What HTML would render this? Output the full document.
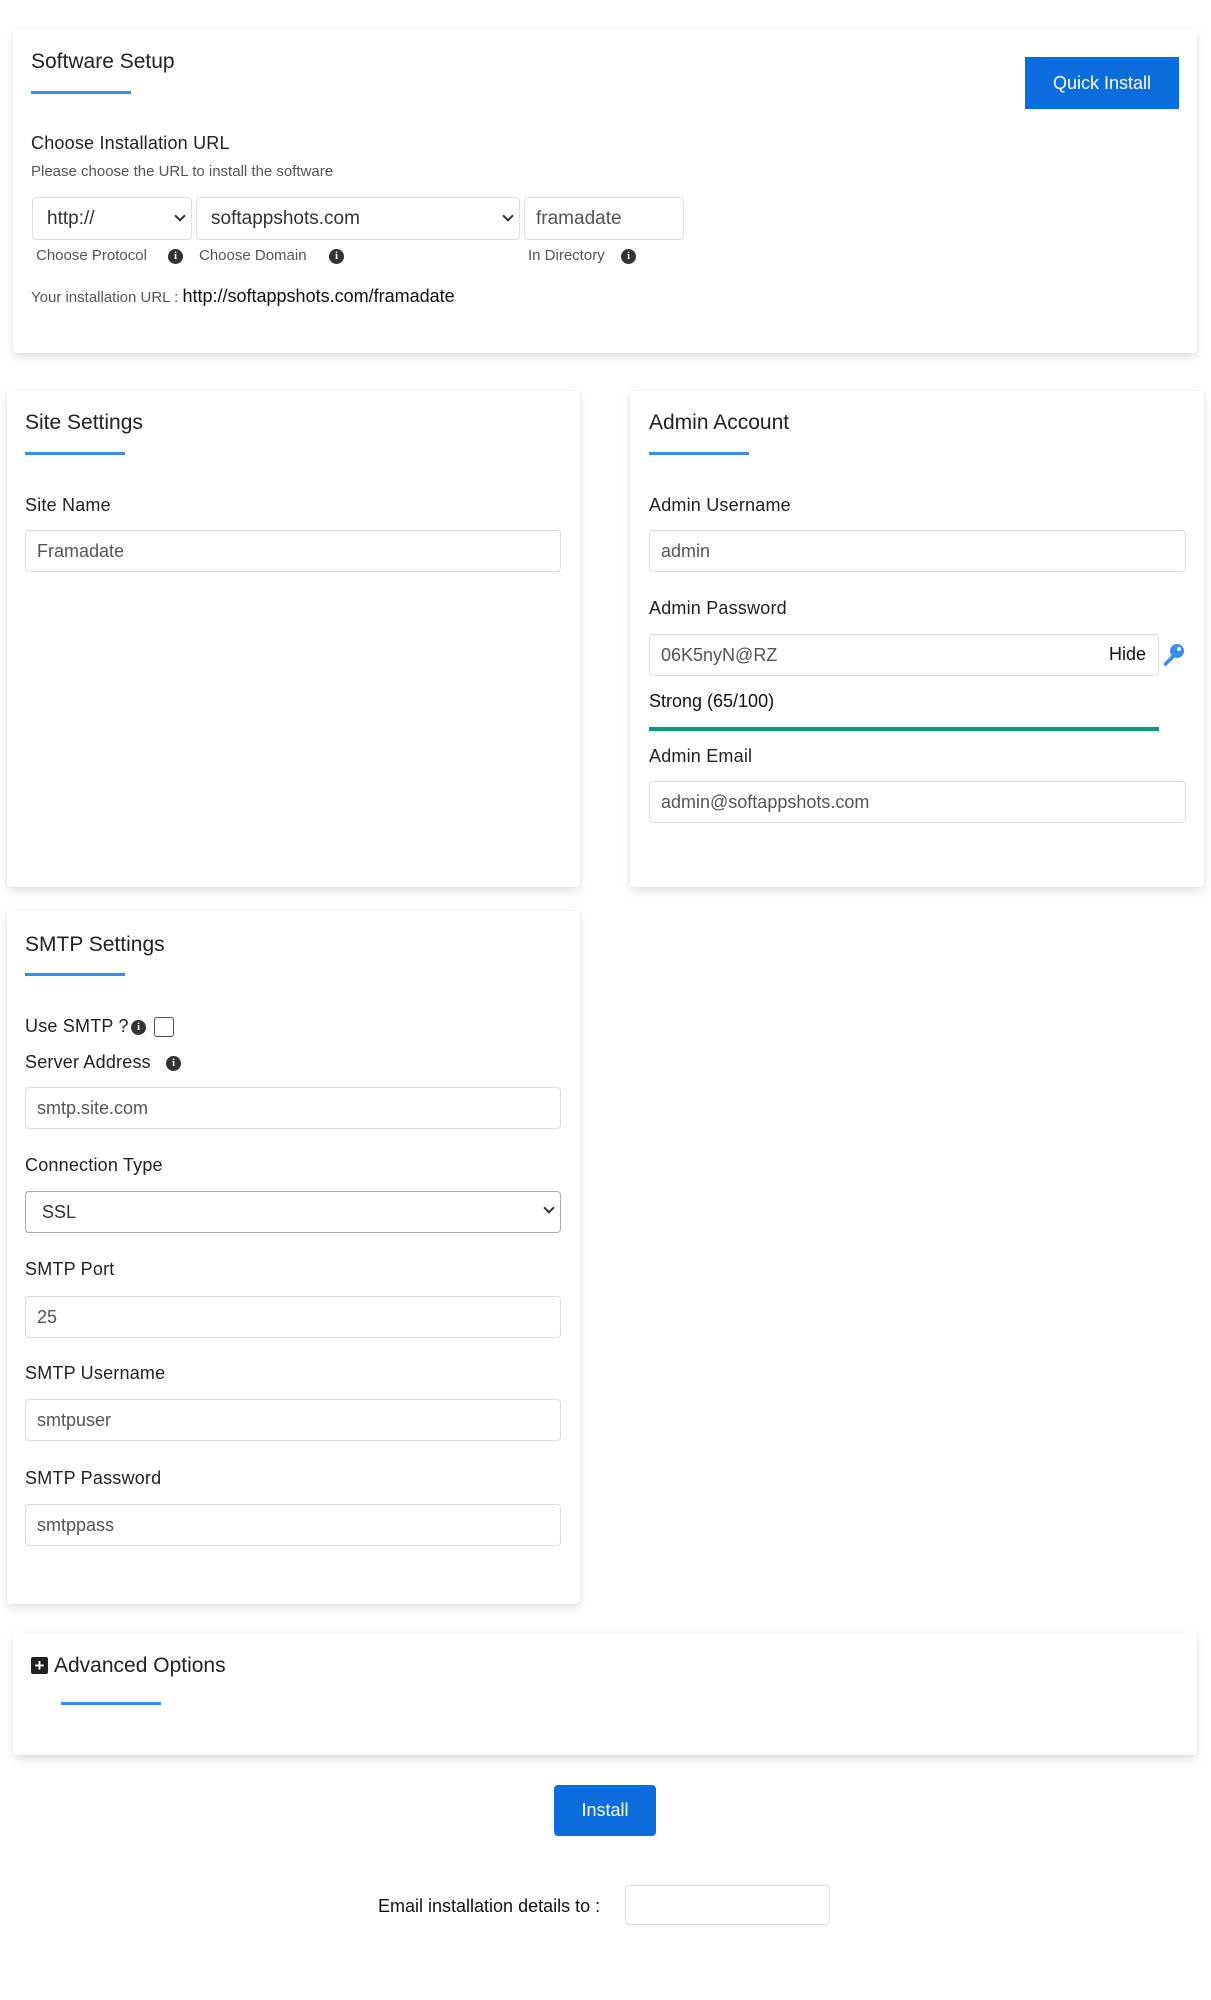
<!DOCTYPE html>
<html><head><meta charset="utf-8"><style>
*{box-sizing:border-box;margin:0;padding:0}
body{width:1211px;height:2000px;background:#fff;font-family:"Liberation Sans",sans-serif;color:#222;position:relative;overflow:hidden}
.card{position:absolute;background:#fff;border-radius:4px;box-shadow:0 4px 10px rgba(0,0,0,0.12),0 0 2px rgba(0,0,0,0.06)}
.a{position:absolute;white-space:nowrap}
.t{font-size:21px;color:#222}
.ul{position:absolute;height:3px;background:#3b8cf0}
.lb{font-size:18px;color:#222;letter-spacing:0.2px}
.in{position:absolute;border:1px solid #ddd;border-radius:4px;background:#fff;font-size:18px;color:#555;padding-left:11px;display:flex;align-items:center}
.info{position:absolute;width:15px;height:15px;border-radius:50%;background:#333;color:#fff;font:bold 11px "Liberation Serif",serif;text-align:center;line-height:15px}
.chev{position:absolute;width:8px;height:8px;border-right:2px solid #333;border-bottom:2px solid #333;transform:rotate(45deg)}
.btn{position:absolute;background:#0a6ddc;color:#fff;font-size:18px;display:flex;align-items:center;justify-content:center}
</style></head><body>

<div class="card" style="left:13px;top:29px;width:1184px;height:324px"></div>
<div class="a t" style="left:31px;top:50px">Software Setup</div>
<div class="ul" style="left:31px;top:91px;width:100px"></div>
<div class="btn" style="left:1025px;top:57px;width:154px;height:52px">Quick Install</div>
<div class="a lb" style="left:31px;top:133px">Choose Installation URL</div>
<div class="a" style="left:31px;top:163px;font-size:15px;color:#555">Please choose the URL to install the software</div>
<div class="in" style="left:32px;top:197px;width:160px;height:43px;color:#333;font-size:19px;padding-left:14px">http://</div>
<div class="chev" style="left:176px;top:212px"></div>
<div class="in" style="left:196px;top:197px;width:324px;height:43px;color:#333;font-size:19px;padding-left:14px">softappshots.com</div>
<div class="chev" style="left:504px;top:212px"></div>
<div class="in" style="left:524px;top:197px;width:160px;height:43px;font-size:19px">framadate</div>
<div class="a" style="left:36px;top:247px;font-size:15px;color:#555">Choose Protocol</div><div class="info" style="left:168px;top:249px">i</div>
<div class="a" style="left:199px;top:247px;font-size:15px;color:#555">Choose Domain</div><div class="info" style="left:329px;top:249px">i</div>
<div class="a" style="left:528px;top:247px;font-size:15px;color:#555">In Directory</div><div class="info" style="left:621px;top:249px">i</div>
<div class="a" style="left:31px;top:286px;font-size:15px;color:#555">Your installation URL : <span style="font-size:18px;color:#111">http://softappshots.com/framadate</span></div>

<div class="card" style="left:7px;top:391px;width:573px;height:496px"></div>
<div class="a t" style="left:25px;top:411px">Site Settings</div>
<div class="ul" style="left:25px;top:452px;width:100px"></div>
<div class="a lb" style="left:25px;top:495px">Site Name</div>
<div class="in" style="left:25px;top:530px;width:536px;height:42px">Framadate</div>

<div class="card" style="left:630px;top:391px;width:574px;height:496px"></div>
<div class="a t" style="left:649px;top:411px">Admin Account</div>
<div class="ul" style="left:649px;top:452px;width:100px"></div>
<div class="a lb" style="left:649px;top:495px">Admin Username</div>
<div class="in" style="left:649px;top:530px;width:537px;height:42px">admin</div>
<div class="a lb" style="left:649px;top:598px">Admin Password</div>
<div class="in" style="left:649px;top:634px;width:510px;height:42px">06K5nyN@RZ</div>
<div class="a" style="left:1109px;top:644px;font-size:18px;color:#111">Hide</div>
<svg class="a" style="left:1161px;top:643px" width="24" height="24" viewBox="0 0 24 24"><circle cx="16" cy="8" r="7" fill="#3b8cf0"/><circle cx="18" cy="6" r="2" fill="#fff"/><path d="M12 11 L3 20 Q2 22 4 23 Q5 23 6 22 L15 13Z" fill="#3b8cf0"/></svg>
<div class="a" style="left:649px;top:691px;font-size:18px;color:#111">Strong (65/100)</div>
<div class="a" style="left:649px;top:727px;width:510px;height:4px;background:#0d9680"></div>
<div class="a lb" style="left:649px;top:746px">Admin Email</div>
<div class="in" style="left:649px;top:781px;width:537px;height:42px">admin@softappshots.com</div>

<div class="card" style="left:7px;top:911px;width:573px;height:693px"></div>
<div class="a t" style="left:25px;top:933px">SMTP Settings</div>
<div class="ul" style="left:25px;top:973px;width:100px"></div>
<div class="a lb" style="left:25px;top:1016px">Use SMTP ?</div>
<div class="info" style="left:131px;top:1020px">i</div>
<div class="a" style="left:154px;top:1017px;width:20px;height:20px;border:1.5px solid #555;border-radius:3px"></div>
<div class="a lb" style="left:25px;top:1052px">Server Address</div>
<div class="info" style="left:166px;top:1056px">i</div>
<div class="in" style="left:25px;top:1087px;width:536px;height:42px">smtp.site.com</div>
<div class="a lb" style="left:25px;top:1155px">Connection Type</div>
<div class="in" style="left:25px;top:1191px;width:536px;height:42px;border-color:#aaa;color:#333;padding-left:16px">SSL</div>
<div class="chev" style="left:545px;top:1204px"></div>
<div class="a lb" style="left:25px;top:1259px">SMTP Port</div>
<div class="in" style="left:25px;top:1296px;width:536px;height:42px">25</div>
<div class="a lb" style="left:25px;top:1363px">SMTP Username</div>
<div class="in" style="left:25px;top:1399px;width:536px;height:42px">smtpuser</div>
<div class="a lb" style="left:25px;top:1468px">SMTP Password</div>
<div class="in" style="left:25px;top:1504px;width:536px;height:42px">smtppass</div>

<div class="card" style="left:13px;top:1633px;width:1184px;height:122px"></div>
<div class="a" style="left:31px;top:1657px;width:17px;height:17px;background:#222;border-radius:2px;color:#fff;font:bold 17px/17px 'Liberation Sans',sans-serif;text-align:center">+</div>
<div class="a t" style="left:54px;top:1654px">Advanced Options</div>
<div class="ul" style="left:61px;top:1702px;width:100px"></div>

<div class="btn" style="left:554px;top:1785px;width:102px;height:51px;border-radius:4px">Install</div>
<div class="a" style="left:378px;top:1896px;font-size:18px;color:#111">Email installation details to :</div>
<div class="in" style="left:625px;top:1885px;width:205px;height:40px"></div>
</body></html>
